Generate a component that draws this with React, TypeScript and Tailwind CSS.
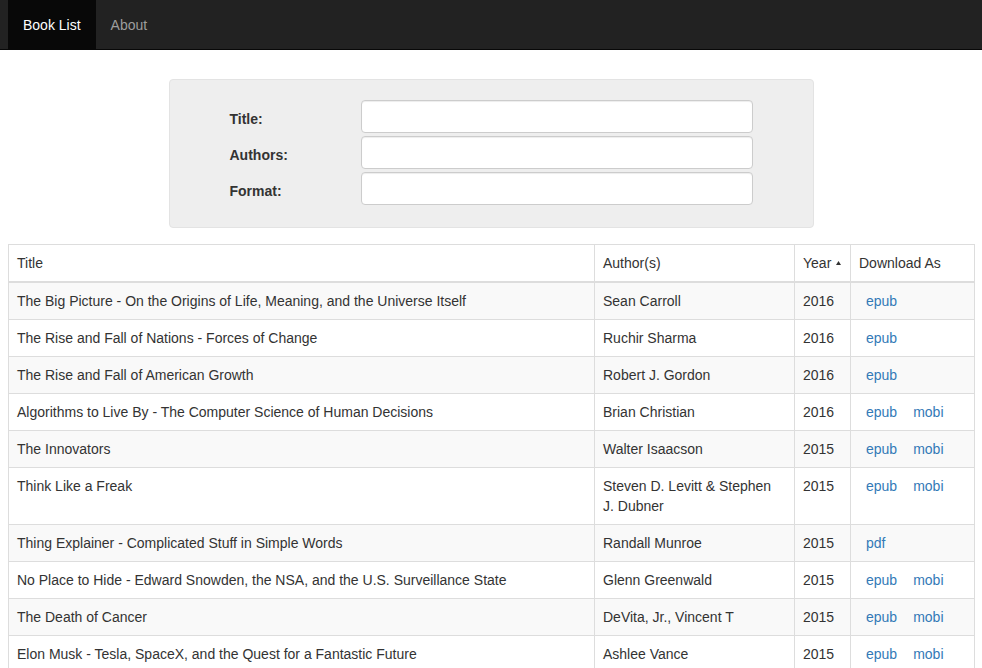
import React from "react";

type Book = { title: string; authors: string; year: string; formats: string[] };

const books: Book[] = [
  { title: "The Big Picture - On the Origins of Life, Meaning, and the Universe Itself", authors: "Sean Carroll", year: "2016", formats: ["epub"] },
  { title: "The Rise and Fall of Nations - Forces of Change", authors: "Ruchir Sharma", year: "2016", formats: ["epub"] },
  { title: "The Rise and Fall of American Growth", authors: "Robert J. Gordon", year: "2016", formats: ["epub"] },
  { title: "Algorithms to Live By - The Computer Science of Human Decisions", authors: "Brian Christian", year: "2016", formats: ["epub", "mobi"] },
  { title: "The Innovators", authors: "Walter Isaacson", year: "2015", formats: ["epub", "mobi"] },
  { title: "Think Like a Freak", authors: "Steven D. Levitt & Stephen J.\u00a0Dubner", year: "2015", formats: ["epub", "mobi"] },
  { title: "Thing Explainer - Complicated Stuff in Simple Words", authors: "Randall Munroe", year: "2015", formats: ["pdf"] },
  { title: "No Place to Hide - Edward Snowden, the NSA, and the U.S. Surveillance State", authors: "Glenn Greenwald", year: "2015", formats: ["epub", "mobi"] },
  { title: "The Death of Cancer", authors: "DeVita, Jr., Vincent T", year: "2015", formats: ["epub", "mobi"] },
  { title: "Elon Musk - Tesla, SpaceX, and the Quest for a Fantastic Future", authors: "Ashlee Vance", year: "2015", formats: ["epub", "mobi"] },
];

export default function App() {
  return (
    <div className="min-h-screen bg-white text-[14px] leading-[20px] text-[#333]" style={{ fontFamily: '"Liberation Sans", Arial, sans-serif' }}>
      <nav className="h-[50px] bg-[#222] border-b border-[#080808] flex pl-[8px]">
        <a className="h-[49px] px-[15px] flex items-center bg-[#080808] text-white">Book List</a>
        <a className="h-[49px] px-[15px] flex items-center text-[#9d9d9d]">About</a>
      </nav>

      <div className="flex justify-center mt-[29px]">
        <div className="w-[645px] h-[149px] bg-[#eeeeee] border border-[#e3e3e3] rounded-[4px] pt-[20px] px-[60px] flex flex-col gap-[3px]">
          {["Title:", "Authors:", "Format:"].map((l) => (
            <div key={l} className="flex items-center">
              <label className="w-[131px] font-bold pt-[4px]">{l}</label>
              <input className="w-[392px] h-[33px] bg-white border border-[#ccc] rounded-[4px] shadow-[inset_0_1px_1px_rgba(0,0,0,0.075)]" />
            </div>
          ))}
        </div>
      </div>

      <div className="pl-[8px] pr-[7px] mt-[16px]">
        <table className="w-full table-fixed border-collapse border border-[#ddd]">
          <colgroup>
            <col className="w-[586px]" />
            <col className="w-[200px]" />
            <col className="w-[56px]" />
            <col />
          </colgroup>
          <thead>
            <tr className="bg-white">
              <th className="text-left font-normal p-[8px] border border-[#ddd] border-b-2">Title</th>
              <th className="text-left font-normal p-[8px] border border-[#ddd] border-b-2">Author(s)</th>
              <th className="text-left font-normal p-[8px] border border-[#ddd] border-b-2 whitespace-nowrap">
                Year
                <svg className="inline-block ml-[5px] mb-[3px]" width="5" height="4" viewBox="0 0 5 4">
                  <path d="M2.5 0 L5 4 L0 4 Z" fill="#333" />
                </svg>
              </th>
              <th className="text-left font-normal p-[8px] border border-[#ddd] border-b-2">Download As</th>
            </tr>
          </thead>
          <tbody>
            {books.map((b, i) => (
              <tr key={i} className={i % 2 === 0 ? "bg-[#f9f9f9]" : "bg-white"}>
                <td className="align-top p-[8px] border border-[#ddd]">{b.title}</td>
                <td className="align-top p-[8px] border border-[#ddd]">{b.authors}</td>
                <td className="align-top p-[8px] border border-[#ddd]">{b.year}</td>
                <td className="align-top p-[8px] border border-[#ddd]">
                  <div className="flex gap-[16px] pl-[7px]">
                    {b.formats.map((f) => (
                      <a key={f} className="text-[#337ab7]">{f}</a>
                    ))}
                  </div>
                </td>
              </tr>
            ))}
          </tbody>
        </table>
      </div>
    </div>
  );
}
